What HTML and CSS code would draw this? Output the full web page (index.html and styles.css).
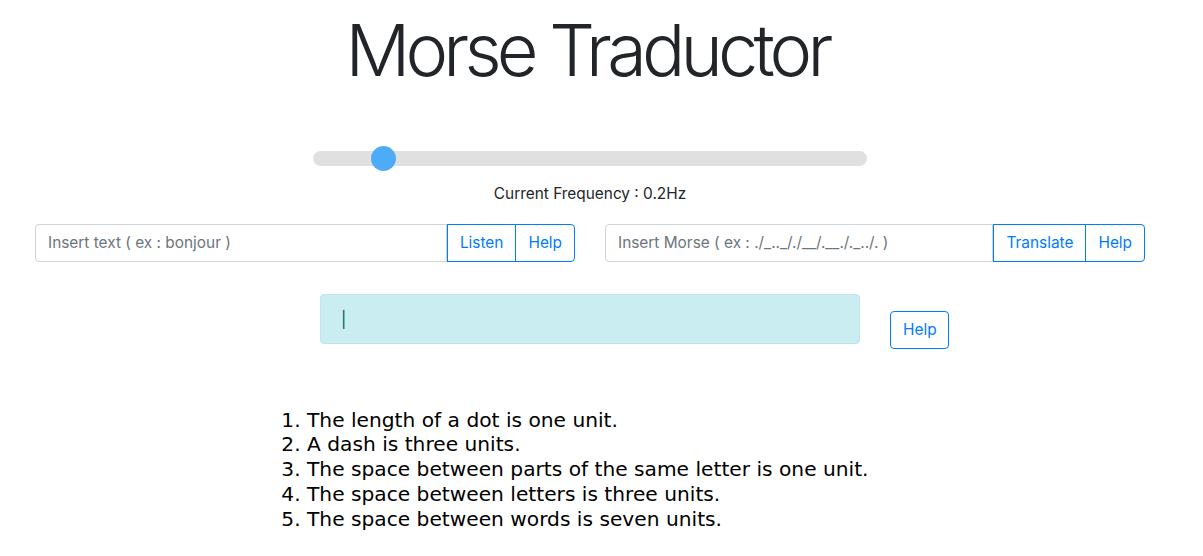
FILE: index.html
```html
<!DOCTYPE html>
<html lang="en">
<head>
<meta charset="utf-8">
<title>Morse Traductor</title>
<link rel="stylesheet" href="styles.css">
</head>
<body>
<div class="page">
  <h1 class="title">Morse Traductor</h1>

  <div class="slider-block">
    <div class="slider">
      <div class="track"></div>
      <div class="thumb"></div>
    </div>
    <p class="freq">Current Frequency : 0.2Hz</p>
  </div>

  <div class="row">
    <div class="col-6">
      <div class="input-group">
        <input class="form-control" type="text" placeholder="Insert text ( ex : bonjour )">
        <button class="btn btn-outline btn-mid">Listen</button>
        <button class="btn btn-outline btn-last">Help</button>
      </div>
    </div>
    <div class="col-6">
      <div class="input-group">
        <input class="form-control" type="text" placeholder="Insert Morse ( ex : ./_.._/./__/.__./._../. )">
        <button class="btn btn-outline btn-mid">Translate</button>
        <button class="btn btn-outline btn-last">Help</button>
      </div>
    </div>
  </div>

  <div class="row row-output">
    <div class="col-6 offset-3">
      <div class="alert-info">|</div>
    </div>
    <div class="col-help">
      <button class="btn btn-outline btn-single">Help</button>
    </div>
  </div>

  <ol class="rules">
    <li>The length of a dot is one unit.</li>
    <li>A dash is three units.</li>
    <li>The space between parts of the same letter is one unit.</li>
    <li>The space between letters is three units.</li>
    <li>The space between words is seven units.</li>
  </ol>
</div>
</body>
</html>
```

FILE: styles.css
```css
* {
  box-sizing: border-box;
}

body {
  margin: 0;
  font-family: "Inter", "Roboto", "Liberation Sans", sans-serif;
  font-size: 15.4px;
  line-height: 1.5;
  color: #212529;
  background: #ffffff;
}

.page {
  width: 1140px;
  margin-left: 20px;
}

.title {
  margin: 0;
  padding-top: 7px;
  padding-right: 6px;
  text-align: center;
  font-size: 72px;
  font-weight: 300;
  line-height: 1.2;
  letter-spacing: -4.8px;
}

.slider-block {
  margin-top: 53px;
  display: flex;
  flex-direction: column;
  align-items: center;
}

.slider {
  position: relative;
  width: 554px;
  height: 24px;
  display: flex;
  align-items: center;
}

.track {
  width: 100%;
  height: 15px;
  border-radius: 8px;
  background: #e0e0e0;
}

.thumb {
  position: absolute;
  left: 58px;
  top: 0;
  width: 25px;
  height: 25px;
  border-radius: 50%;
  background: #4dabf7;
}

.freq {
  margin: 12px 0 0;
  text-align: center;
}

.row {
  display: flex;
  margin-top: 18px;
}

.col-6 {
  width: 570px;
  padding: 0 15px;
}

.offset-3 {
  margin-left: 285px;
}

.input-group {
  display: flex;
  height: 38px;
}

.form-control {
  flex: 1;
  min-width: 0;
  height: 38px;
  padding: 6px 12px;
  font-family: inherit;
  font-size: 15.4px;
  color: #495057;
  border: 1px solid #ced4da;
  border-radius: 4px 0 0 4px;
  background: #fff;
  outline: none;
}

.form-control::placeholder {
  color: #6c757d;
}

.btn {
  height: 38px;
  padding: 6px 12px;
  font-family: inherit;
  font-size: 15.4px;
  line-height: 1.5;
  color: #007bff;
  background: #fff;
  border: 1px solid #007bff;
  cursor: pointer;
}

.btn-mid {
  border-radius: 0;
}

.btn-last {
  margin-left: -1px;
  border-radius: 0 4px 4px 0;
}

.btn-single {
  border-radius: 4px;
  width: 59px;
}

.row-output {
  margin-top: 32px;
}

.alert-info {
  height: 50px;
  padding: 12px 20px;
  background: #caedf1;
  border: 1px solid #bee5eb;
  border-radius: 4px;
  color: #0c5460;
  font-size: 16px;
}

.col-help {
  padding: 17px 15px 0;
}

.rules {
  margin: 59px 0 0 262px;
  padding-left: 25px;
  font-family: "DejaVu Sans", sans-serif;
  font-size: 20.2px;
  line-height: 24.75px;
  color: #000;
}
```
